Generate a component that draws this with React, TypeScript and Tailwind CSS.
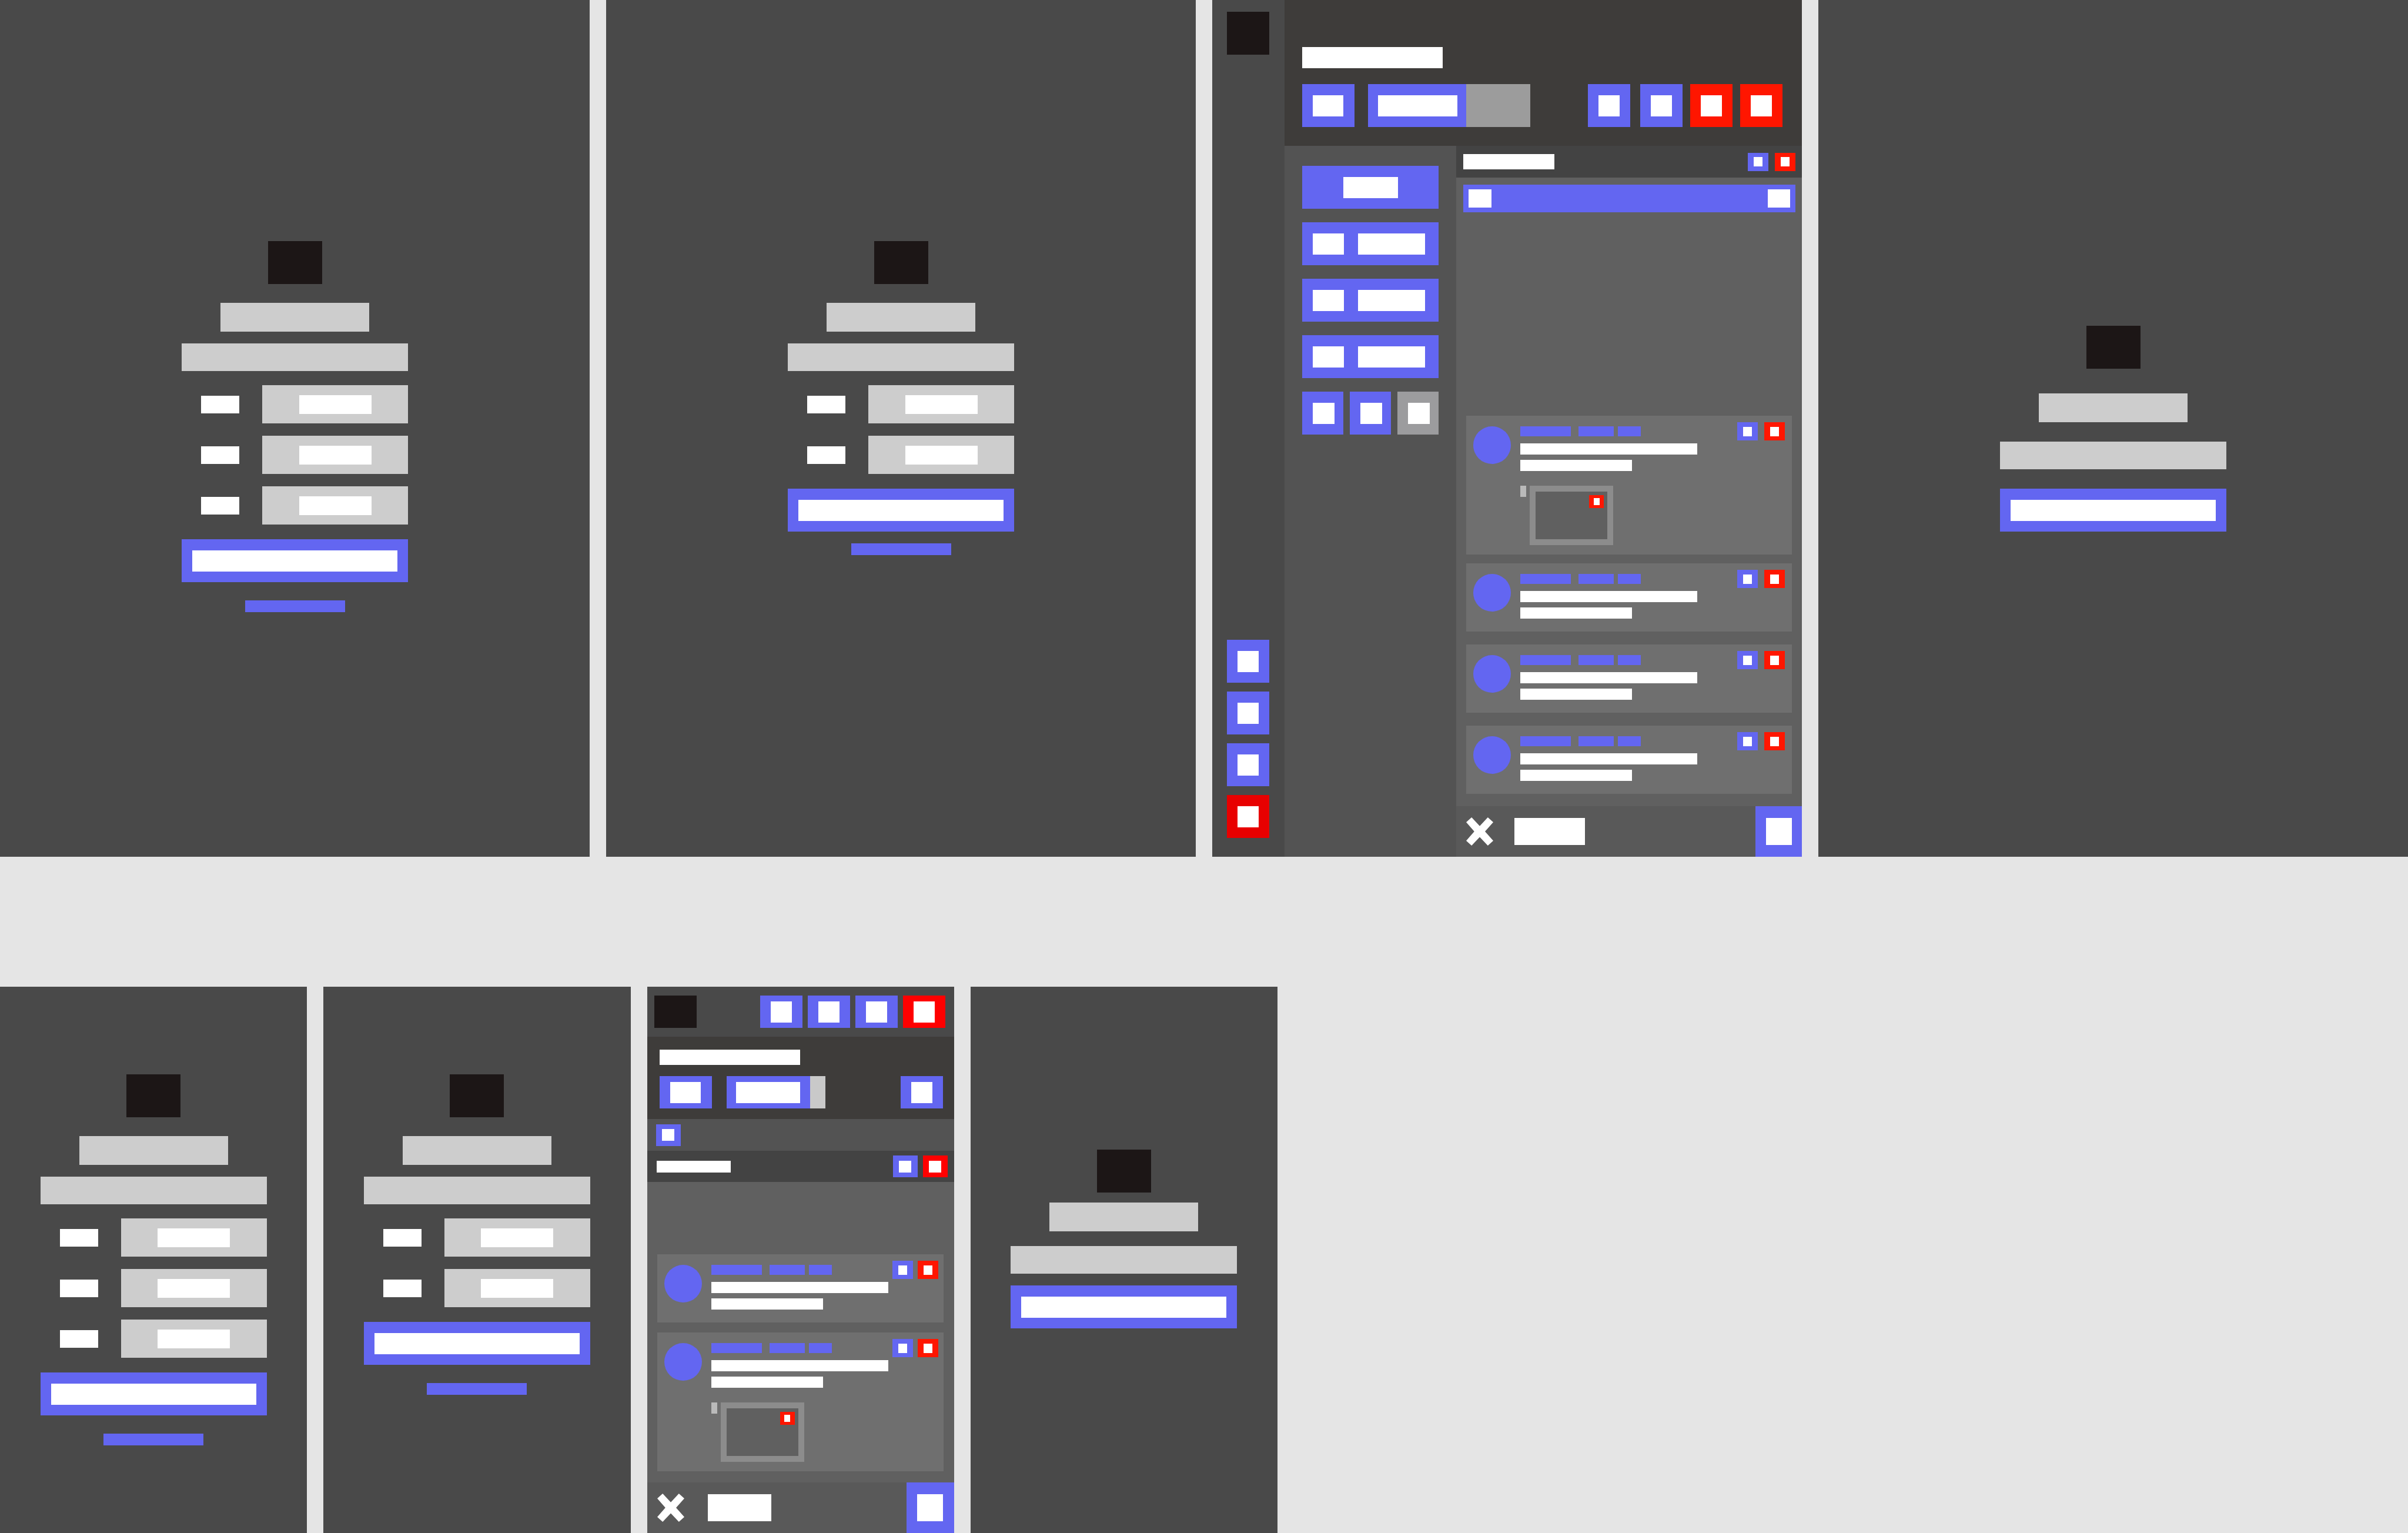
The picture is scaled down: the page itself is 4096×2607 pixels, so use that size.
import type { ReactNode } from "react";
import clsx from "clsx";

/* ---------- primitives ---------- */

type Tone = "indigo" | "red" | "crimson" | "scarlet" | "grey";

const tones: Record<Tone, string> = {
  indigo: "bg-[#6366f1]",
  red: "bg-[#ff1600]",
  crimson: "bg-[#e80000]",
  scarlet: "bg-[#ff0000]",
  grey: "bg-[#9c9c9e]",
};

function Bar({ className }: { className: string }) {
  return <span className={clsx("block shrink-0", className)} />;
}

function BlockButton({
  label,
  tone = "indigo",
  className,
  children,
}: {
  label: string;
  tone?: Tone;
  className: string;
  children: ReactNode;
}) {
  return (
    <button
      type="button"
      aria-label={label}
      className={clsx("flex shrink-0 items-center", tones[tone], className)}
    >
      {children}
    </button>
  );
}

function IconButton({ label, tone, tall = true }: { label: string; tone?: Tone; tall?: boolean }) {
  return (
    <BlockButton
      label={label}
      tone={tone}
      className={clsx("w-[72px] justify-center", tall ? "h-[73px]" : "h-[55px]")}
    >
      <Bar className="size-9 bg-white" />
    </BlockButton>
  );
}

function MiniButton({ label, tone }: { label: string; tone?: Tone }) {
  return (
    <BlockButton label={label} tone={tone} className="h-[31px] w-[35px] justify-center">
      <Bar className="h-4 w-[15px] bg-white" />
    </BlockButton>
  );
}

function ToolButton({ label, tone }: { label: string; tone?: Tone }) {
  return (
    <BlockButton label={label} tone={tone} className="h-[37px] w-[42px] justify-center">
      <Bar className="h-5 w-[21px] bg-white" />
    </BlockButton>
  );
}

function Cross() {
  return (
    <svg viewBox="0 0 46 48" className="h-12 w-[46px]" fill="#fff" aria-hidden="true">
      <path d="M9.2 0 0 8.3 13.8 24 0 39.7 9.2 48 23 33.4 36.8 48 46 39.7 32 24 46 8.3 36.8 0 23 14.8Z" />
    </svg>
  );
}

/* ---------- account screens ---------- */

function Field({ id }: { id: string }) {
  return (
    <div className="flex h-[65px] items-center justify-between pl-[33px]">
      <label htmlFor={id} aria-label={id} className="block h-[30px] w-[65px] bg-white" />
      <div className="flex h-full w-[248px] items-center justify-center bg-[#cdcdcd]">
        <input id={id} type="text" className="h-8 w-[123px] bg-white" />
      </div>
    </div>
  );
}

function SubmitButton() {
  return (
    <BlockButton label="Submit" className="h-[73px] w-full px-[18px]">
      <span className="block h-9 flex-1 bg-white" />
    </BlockButton>
  );
}

function AccountScreen({
  name,
  fields,
  top,
  linkGap,
}: {
  name: string;
  fields: number;
  top: string;
  linkGap: string;
}) {
  return (
    <section className={clsx("bg-[#494949]", top)}>
      <form className="mx-auto flex w-[385px] flex-col items-center">
        <Bar className="h-[73px] w-[92px] bg-[#1c1616]" />
        <Bar className="mt-8 h-[49px] w-[253px] bg-[#cdcdcd]" />
        <Bar className="mt-5 h-[47px] w-full bg-[#cdcdcd]" />
        <div className="mt-6 mb-[25px] flex w-full flex-col gap-[21px]">
          {Array.from({ length: fields }, (_, i) => (
            <Field key={i} id={`${name}-${i + 1}`} />
          ))}
        </div>
        <SubmitButton />
        <a href="#" aria-label="Switch form" className={clsx("block h-5 w-[170px] bg-[#6366f1]", linkGap)} />
      </form>
    </section>
  );
}

function NoticeScreen({ top, gaps }: { top: string; gaps: [string, string, string] }) {
  return (
    <section className={clsx("bg-[#494949]", top)}>
      <div className="mx-auto flex w-[385px] flex-col items-center">
        <Bar className="h-[73px] w-[92px] bg-[#1c1616]" />
        <Bar className={clsx("h-[49px] w-[253px] bg-[#cdcdcd]", gaps[0])} />
        <Bar className={clsx("h-[47px] w-full bg-[#cdcdcd]", gaps[1])} />
        <div className={clsx("w-full", gaps[2])}>
          <SubmitButton />
        </div>
      </div>
    </section>
  );
}

/* ---------- messages ---------- */

function Attachment() {
  return (
    <div className="mt-[25px] mb-4 flex items-start gap-[6px]">
      <Bar className="h-[19px] w-[10px] bg-[#bababa]" />
      <div className="h-[101px] w-[142px] bg-[#8c8c8c] p-[10px]">
        <div className="flex h-full items-start justify-end bg-[#606060] p-[6px]">
          <BlockButton label="Remove attachment" tone="red" className="h-[22px] w-[25px] justify-center">
            <Bar className="h-3 w-[10px] bg-white" />
          </BlockButton>
        </div>
      </div>
    </div>
  );
}

function Message({ attachment = false, compact = false }: { attachment?: boolean; compact?: boolean }) {
  return (
    <article className={clsx("flex items-start bg-[#6f6f6f] pl-[12px]", compact ? "pr-[9px]" : "pr-[12px]")}>
      <Bar className="mt-[18px] size-16 rounded-full bg-[#6366f1]" />
      <div className="ml-4 min-h-[116px] min-w-0 flex-1 pt-[18px]">
        <div className="flex">
          <Bar className="h-[17px] w-[86px] bg-[#6366f1]" />
          <Bar className="ml-[13px] h-[17px] w-[60px] bg-[#6366f1]" />
          <Bar className="ml-[7px] h-[17px] w-[39px] bg-[#6366f1]" />
        </div>
        <Bar className="mt-3 h-[19px] w-[301px] bg-white" />
        <Bar className="mt-[9px] h-[19px] w-[190px] bg-white" />
        {attachment && <Attachment />}
      </div>
      <div className={clsx("mt-[11px] flex", compact ? "gap-2" : "gap-[11px]")}>
        <MiniButton label="Edit message" />
        <MiniButton label="Delete message" tone="red" />
      </div>
    </article>
  );
}

function Composer({ compact = false }: { compact?: boolean }) {
  return (
    <footer className="flex h-[86px] items-center bg-[#595959] pl-[17px]">
      <button type="button" aria-label="Clear">
        <Cross />
      </button>
      <input
        type="text"
        aria-label="Message"
        className={clsx("h-[46px] bg-white", compact ? "ml-10 w-[108px]" : "ml-9 w-[120px]")}
      />
      <BlockButton
        label="Send"
        className={clsx("ml-auto h-full justify-center", compact ? "w-[81px]" : "w-[79px]")}
      >
        <Bar className="h-[46px] w-[44px] bg-white" />
      </BlockButton>
    </footer>
  );
}

/* ---------- workspace, wide ---------- */

function NavButton({ label }: { label: string }) {
  return (
    <BlockButton label={label} className="h-[73px] w-full gap-6 pl-[18px]">
      <Bar className="h-9 w-[53px] bg-white" />
      <Bar className="h-9 w-[114px] bg-white" />
    </BlockButton>
  );
}

function PanelButton({ label, tone }: { label: string; tone?: Tone }) {
  return (
    <BlockButton label={label} tone={tone} className="h-[73px] pl-[18px]">
      <Bar className="h-9 w-[37px] bg-white" />
    </BlockButton>
  );
}

function WideWorkspace() {
  return (
    <section className="flex">
      <nav className="flex w-[123px] flex-col gap-[15px] bg-[#494949] pt-5 pb-8 pl-[25px]">
        <Bar className="mb-auto h-[73px] w-[72px] bg-[#1c1616]" />
        <IconButton label="Home" />
        <IconButton label="Profile" />
        <IconButton label="Settings" />
        <IconButton label="Sign out" tone="crimson" />
      </nav>

      <div className="flex min-w-0 flex-1 flex-col">
        <header className="bg-[#3e3c3a] pt-20 pr-[33px] pb-8 pl-[30px]">
          <Bar className="h-9 w-[239px] bg-white" />
          <div className="mt-[27px] flex">
            <BlockButton label="Status" className="h-[73px] w-[89px] pl-[18px]">
              <Bar className="h-9 w-[52px] bg-white" />
            </BlockButton>
            <BlockButton label="Progress" className="ml-[23px] h-[73px] w-[167px] pl-[17px]">
              <Bar className="h-9 w-[135px] bg-white" />
            </BlockButton>
            <Bar className="h-[73px] w-[109px] bg-[#9c9c9c]" />
            <div className="ml-auto flex gap-[13px]">
              <div className="mr-1">
                <IconButton label="Share" />
              </div>
              <IconButton label="Edit" />
              <IconButton label="Archive" tone="red" />
              <IconButton label="Delete" tone="red" />
            </div>
          </div>
        </header>

        <div className="flex flex-1">
          <aside className="flex w-[292px] flex-col gap-[23px] bg-[#535353] px-[30px] pt-[34px]">
            <BlockButton label="Create" className="h-[73px] w-full justify-center">
              <Bar className="h-9 w-[93px] bg-white" />
            </BlockButton>
            <NavButton label="Channel 1" />
            <NavButton label="Channel 2" />
            <NavButton label="Channel 3" />
            <div className="grid grid-cols-3 gap-[11px]">
              <PanelButton label="Previous" />
              <PanelButton label="Next" />
              <PanelButton label="Last" tone="grey" />
            </div>
          </aside>

          <main className="flex min-w-0 flex-1 flex-col bg-[#606060]">
            <div className="flex h-[54px] items-center gap-[11px] bg-[#434343] pr-[11px] pl-[12px]">
              <Bar className="mr-auto h-[26px] w-[155px] bg-white" />
              <MiniButton label="Edit channel" />
              <MiniButton label="Delete channel" tone="red" />
            </div>
            <div className="mt-3 mr-[11px] ml-[12px] flex h-[47px] items-center justify-between bg-[#6366f1] px-[9px]">
              <Bar className="h-[31px] w-[39px] bg-white" />
              <Bar className="h-[31px] w-[38px] bg-white" />
            </div>
            <div className="mt-auto flex flex-col px-[17px] pb-[21px]">
              <Message attachment />
              <div className="mt-[15px] flex flex-col gap-[22px]">
                <Message />
                <Message />
                <Message />
              </div>
            </div>
            <Composer />
          </main>
        </div>
      </div>
    </section>
  );
}

/* ---------- workspace, narrow ---------- */

function NarrowWorkspace() {
  return (
    <section className="flex flex-col bg-[#606060]">
      <nav className="flex h-[85px] items-center gap-[9px] bg-[#494949] pr-[15px] pl-[12px]">
        <Bar className="mr-auto h-[55px] w-[72px] bg-[#1c1616]" />
        <IconButton label="Home" tall={false} />
        <IconButton label="Profile" tall={false} />
        <IconButton label="Settings" tall={false} />
        <IconButton label="Sign out" tone="scarlet" tall={false} />
      </nav>

      <header className="bg-[#3e3c3a] pt-[22px] pr-[19px] pb-[18px] pl-[21px]">
        <Bar className="h-[26px] w-[239px] bg-white" />
        <div className="mt-[19px] flex">
          <BlockButton label="Status" className="h-[55px] w-[89px] pl-[18px]">
            <Bar className="h-9 w-[52px] bg-white" />
          </BlockButton>
          <BlockButton label="Progress" className="ml-[25px] h-[55px] w-[142px] justify-center">
            <Bar className="h-9 w-[109px] bg-white" />
          </BlockButton>
          <Bar className="mr-auto h-[55px] w-[26px] bg-[#c9c9c9]" />
          <IconButton label="More" tall={false} />
        </div>
      </header>

      <div className="flex h-[54px] items-center bg-[#535353] pl-[15px]">
        <ToolButton label="Menu" />
      </div>
      <div className="flex h-[53px] items-center gap-[9px] bg-[#434343] pr-[11px] pl-4">
        <Bar className="mr-auto h-5 w-[126px] bg-white" />
        <ToolButton label="Edit channel" />
        <ToolButton label="Delete channel" tone="scarlet" />
      </div>

      <div className="mt-auto flex flex-col gap-[17px] pr-[18px] pb-[19px] pl-[17px]">
        <Message compact />
        <Message compact attachment />
      </div>
      <Composer compact />
    </section>
  );
}

/* ---------- page ---------- */

export default function App() {
  return (
    <div className="grid min-h-screen grid-rows-[1457fr_929fr] gap-y-[221px] bg-[#e5e5e5] font-['Liberation_Sans',sans-serif]">
      <div className="grid grid-cols-4 gap-7">
        <AccountScreen name="register" fields={3} top="pt-[410px]" linkGap="mt-[31px]" />
        <AccountScreen name="login" fields={2} top="pt-[410px]" linkGap="mt-5" />
        <WideWorkspace />
        <NoticeScreen top="pt-[554px]" gaps={["mt-[42px]", "mt-[33px]", "mt-[33px]"]} />
      </div>
      <div className="grid w-full max-w-[2173px] grid-cols-4 gap-7">
        <AccountScreen name="register-small" fields={3} top="pt-[149px]" linkGap="mt-[31px]" />
        <AccountScreen name="login-small" fields={2} top="pt-[149px]" linkGap="mt-[31px]" />
        <NarrowWorkspace />
        <NoticeScreen top="pt-[277px]" gaps={["mt-[17px]", "mt-[25px]", "mt-5"]} />
      </div>
    </div>
  );
}
